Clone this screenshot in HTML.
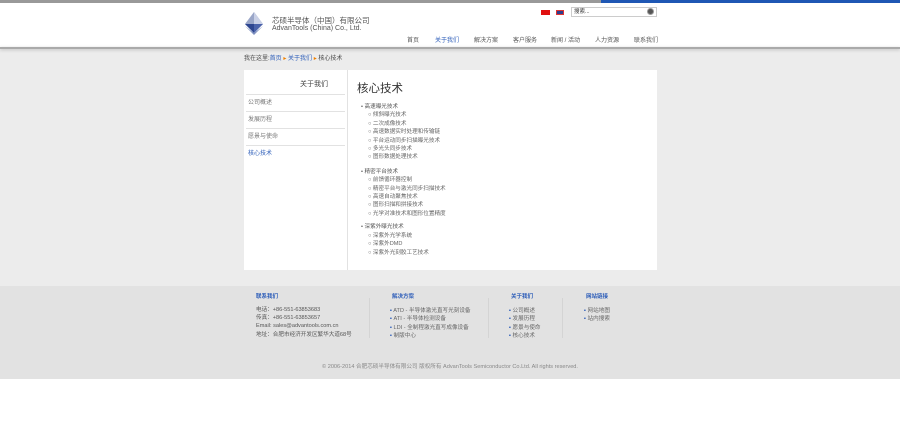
<!DOCTYPE html>
<html><head><meta charset="utf-8"><style>
*{margin:0;padding:0;box-sizing:border-box}
body{width:900px;height:448px;background:#fff;font-family:"Liberation Sans","Noto Sans CJK SC",sans-serif;position:relative;overflow:hidden;color:#555}
.a{position:absolute;white-space:nowrap}
.t{font-size:6px;line-height:8px}
.blue{color:#2a5bb8}
</style></head><body>
<div class="a" style="left:0;top:0;width:601px;height:3px;background:#999"></div>
<div class="a" style="left:601px;top:0;width:299px;height:3px;background:#1f57b4"></div>
<div class="a" style="left:0;top:48px;width:900px;height:238px;background:#ececec"></div>
<div class="a" style="left:0;top:47px;width:900px;height:2px;background:#aaa;box-shadow:0 1px 3px #bbb"></div>
<svg class="a" style="left:244px;top:12px" width="20" height="24" viewBox="0 0 20 24"><polygon points="10,0 19,12 10,21 1,12" fill="#9aa6c8"/><polygon points="10,0 19,12 10,12" fill="#c9d0e6"/><polygon points="1,12 10,12 10,21" fill="#2d4590"/><polygon points="10,12 19,12 10,21" fill="#4a62aa"/><polygon points="1,14 10,23 19,14 10,21" fill="#7d8fbf"/></svg>
<div class="a" style="left:272px;top:15px;font-size:7.5px;color:#555">芯硕半导体（中国）有限公司</div>
<div class="a" style="left:272px;top:25px;font-size:7px;color:#555">AdvanTools (China) Co., Ltd.</div>
<div class="a" style="left:541px;top:10px;width:9px;height:5px;background:#e01010"></div>
<div class="a" style="left:556px;top:10px;width:8px;height:5px;background:#2c3f8c;border:1px solid #d33"></div>
<div class="a" style="left:571px;top:7px;width:86px;height:10px;border:1px solid #ccc;background:#fff"></div>
<div class="a t" style="left:574px;top:8px;color:#333;font-size:5.5px">搜索...</div>
<div class="a" style="left:647px;top:8px;width:7px;height:7px;border-radius:50%;background:#555;border:1.5px solid #999"></div>
<div class="a t" style="left:407px;top:37px">首页</div>
<div class="a t blue" style="left:435px;top:37px">关于我们</div>
<div class="a t" style="left:474px;top:37px">解决方案</div>
<div class="a t" style="left:513px;top:37px">客户服务</div>
<div class="a t" style="left:551px;top:37px">新闻 / 活动</div>
<div class="a t" style="left:595px;top:37px">人力资源</div>
<div class="a t" style="left:634px;top:37px">联系我们</div>
<div class="a t" style="left:244px;top:55px;color:#444">我在这里:<span class="blue">首页</span> <span style="color:#f08000">▸</span> <span class="blue">关于我们</span> <span style="color:#f08000">▸</span> 核心技术</div>
<div class="a" style="left:244px;top:70px;width:413px;height:200px;background:#fff"></div>
<div class="a" style="left:347px;top:70px;width:1px;height:200px;background:#e2e2e2"></div>
<div class="a" style="left:300px;top:79px;font-size:7px;color:#444">关于我们</div>
<div class="a" style="left:246px;top:94px;width:99px;height:1px;background:#e2e2e2"></div>
<div class="a" style="left:246px;top:111px;width:99px;height:1px;background:#e2e2e2"></div>
<div class="a" style="left:246px;top:128px;width:99px;height:1px;background:#e2e2e2"></div>
<div class="a" style="left:246px;top:145px;width:99px;height:1px;background:#e2e2e2"></div>
<div class="a t" style="left:248px;top:99px;color:#777">公司概述</div>
<div class="a t" style="left:248px;top:116px;color:#777">发展历程</div>
<div class="a t" style="left:248px;top:133px;color:#777">愿景与使命</div>
<div class="a t blue" style="left:248px;top:150px">核心技术</div>
<div class="a" style="left:357px;top:80px;font-size:11.5px;color:#333">核心技术</div>
<div class="a" style="left:361px;top:103px;font-size:5.6px;line-height:8.4px;color:#555">
• 高速曝光技术<br>
<div style="padding-left:7px;color:#666">○ 倾斜曝光技术<br>○ 二次成像技术<br>○ 高速数据实时处理和传输链<br>○ 平台运动同步扫描曝光技术<br>○ 多光头同步技术<br>○ 图形数据处理技术</div>
<div style="height:6px"></div>
• 精密平台技术<br>
<div style="padding-left:7px;color:#666">○ 前馈循环器控制<br>○ 精密平台与激光同步扫描技术<br>○ 高速自动聚焦技术<br>○ 图形扫描和拼接技术<br>○ 光学对准技术和图形位置精度</div>
<div style="height:5px"></div>
• 深紫外曝光技术<br>
<div style="padding-left:7px;color:#666">○ 深紫外光学系统<br>○ 深紫外DMD<br>○ 深紫外光刻胶工艺技术</div>
</div>
<div class="a" style="left:0;top:286px;width:900px;height:93px;background:#e2e2e2"></div>
<div class="a t blue" style="left:256px;top:293px;font-weight:bold;font-size:5.5px">联系我们</div>
<div class="a" style="left:256px;top:306px;font-size:5.6px;line-height:8.2px;color:#555">电话：+86-551-63853683<br>传真：+86-551-63853657<br>Email: sales@advantools.com.cn<br>地址：合肥市经济开发区繁华大道68号</div>
<div class="a" style="left:369px;top:298px;width:1px;height:40px;background:#d4d4d4"></div>
<div class="a" style="left:488px;top:298px;width:1px;height:40px;background:#d4d4d4"></div>
<div class="a" style="left:562px;top:298px;width:1px;height:40px;background:#d4d4d4"></div>
<div class="a t blue" style="left:392px;top:293px;font-weight:bold;font-size:5.5px">解决方案</div>
<div class="a" style="left:390px;top:307px;font-size:5.6px;line-height:8.4px;color:#666"><span class="blue">▪</span> ATD - 半导体激光直写光刻设备<br><span class="blue">▪</span> ATI - 半导体检测设备<br><span class="blue">▪</span> LDI - 全制程激光直写成像设备<br><span class="blue">▪</span> 制版中心</div>
<div class="a t blue" style="left:511px;top:293px;font-weight:bold;font-size:5.5px">关于我们</div>
<div class="a" style="left:509px;top:307px;font-size:5.6px;line-height:8.4px;color:#666"><span class="blue">▪</span> 公司概述<br><span class="blue">▪</span> 发展历程<br><span class="blue">▪</span> 愿景与使命<br><span class="blue">▪</span> 核心技术</div>
<div class="a t blue" style="left:586px;top:293px;font-weight:bold;font-size:5.5px">网站链接</div>
<div class="a" style="left:584px;top:307px;font-size:5.6px;line-height:8.4px;color:#666"><span class="blue">▪</span> 网站地图<br><span class="blue">▪</span> 站内搜索</div>
<div class="a" style="left:0;top:362px;width:900px;text-align:center;font-size:5.6px;color:#888">© 2006-2014 合肥芯硕半导体有限公司 版权所有 AdvanTools Semiconductor Co.Ltd. All rights reserved.</div>
</body></html>
